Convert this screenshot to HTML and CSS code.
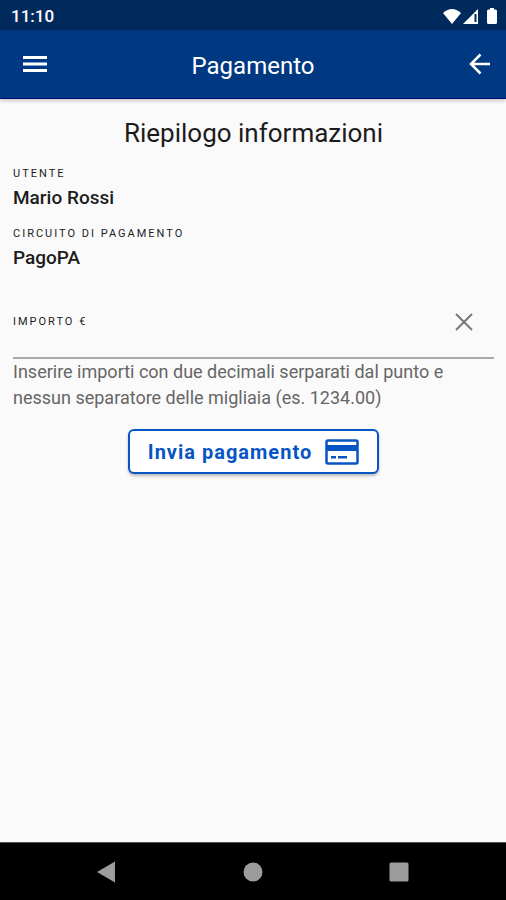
FILE: index.html
```html
<!DOCTYPE html>
<html lang="it">
<head>
<meta charset="utf-8">
<meta name="viewport" content="width=device-width, initial-scale=1">
<title>Pagamento</title>
<link rel="stylesheet" href="styles.css">
</head>
<body>
<div class="status-bar">
  <span>11:10</span>
  <svg class="status-icons" width="56" height="18" viewBox="0 0 56 18" fill="#fff" aria-hidden="true">
    <path d="M1 6Q10-2 19 6L10 17Z"/>
    <path d="M21 17L36 2V17Z"/>
    <path d="M33.500 7V15" stroke="#002a5c" stroke-width="2"/>
    <path d="M45 4Q45 2.500 46.500 2.500H48V1H52V2.500H53.500Q55 2.500 55 4V15.500Q55 17 53.500 17H46.500Q45 17 45 15.500Z"/>
  </svg>
</div>
<header class="app-bar">
  <button class="icon-button" type="button" aria-label="Menu">
    <svg width="24" height="18" viewBox="0 0 24 18" fill="#fff"><path d="M0 1H24V4H0ZM0 7.500H24V10.500H0ZM0 14H24V17H0Z"/></svg>
  </button>
  <h1 class="app-title">Pagamento</h1>
  <button class="icon-button" type="button" aria-label="Indietro">
    <svg width="22" height="22" viewBox="0 0 22 22" fill="none" stroke="#fff" stroke-width="2.500"><path d="M21 11H3M11.500 1.500L2 11L11.500 20.500"/></svg>
  </button>
</header>
<main class="content">
  <h2 class="heading">Riepilogo informazioni</h2>
  <dl class="summary">
    <div class="entry"><dt class="label">UTENTE</dt><dd class="value">Mario Rossi</dd></div>
    <div class="entry"><dt class="label">CIRCUITO DI PAGAMENTO</dt><dd class="value">PagoPA</dd></div>
  </dl>
  <form class="form">
    <div class="field">
      <label class="label" for="amount">IMPORTO €</label>
      <input class="amount" id="amount" type="text" inputmode="decimal" aria-describedby="hint">
      <button class="clear" type="reset" aria-label="Cancella importo">
        <svg width="18" height="18" viewBox="0 0 18 18" fill="none" stroke="#777" stroke-width="2"><path d="M1 1L17 17M17 1L1 17"/></svg>
      </button>
    </div>
    <p class="hint" id="hint">Inserire importi con due decimali serparati dal punto e nessun separatore delle migliaia (es. 1234.00)</p>
    <button class="submit" type="button">
      <span>Invia pagamento</span>
      <svg width="34" height="26" viewBox="0 0 34 26" aria-hidden="true">
        <rect x="1.500" y="1.500" width="31" height="23" rx="1.500" fill="none" stroke="#0755c4" stroke-width="2.500"/>
        <path d="M1 6H33V12H1ZM6 17H11V19.500H6ZM13 17H22V19.500H13Z" fill="#0755c4"/>
      </svg>
    </button>
  </form>
</main>
<nav class="system-nav" aria-label="Sistema">
  <button class="nav-button" type="button" aria-label="Indietro"><svg width="22" height="22" viewBox="0 0 22 22" fill="#9c9c9c"><path d="M1 11L19 .5V21.500Z"/></svg></button>
  <button class="nav-button" type="button" aria-label="Home"><svg width="22" height="22" viewBox="0 0 22 22" fill="#9c9c9c"><circle cx="11" cy="11" r="9.500"/></svg></button>
  <button class="nav-button" type="button" aria-label="Recenti"><svg width="22" height="22" viewBox="0 0 22 22" fill="#9c9c9c"><rect x="1.500" y="1.500" width="19" height="19" rx="1.500"/></svg></button>
</nav>
</body>
</html>
```

FILE: styles.css
```css
* {
  box-sizing: border-box;
}

body {
  display: flex;
  flex-direction: column;
  min-height: 100vh;
  margin: 0;
  background: #fafafa;
  color: #1c1c1c;
  font-family: Roboto, "Noto Sans", sans-serif;
}

button {
  display: flex;
  align-items: center;
  justify-content: center;
  padding: 0;
  border: 0;
  background: none;
  font-family: inherit;
}

.status-bar {
  display: flex;
  align-items: center;
  justify-content: space-between;
  height: 30px;
  padding: 1px 8px 0 11px;
  background: #002a5c;
  color: #fff;
  font-size: 17px;
  font-weight: 500;
}

.app-bar {
  display: flex;
  align-items: center;
  justify-content: space-between;
  height: 69px;
  padding: 0 2px 0 11px;
  border-bottom: 1px solid #040a70;
  background: #003882;
  box-shadow: 0 2px 4px rgb(0 0 0 / 20%);
  color: #fff;
}

.icon-button {
  width: 48px;
  height: 48px;
}

.app-title {
  flex: 1;
  margin: 0;
  padding: 4px 9px 0 0;
  font-size: 24px;
  font-weight: 400;
  line-height: 32px;
  text-align: center;
}

.content {
  flex: 1;
  padding: 16px 12px 16px 13px;
}

.heading {
  margin: 0 0 16px;
  font-size: 26px;
  font-weight: 400;
  line-height: 36px;
  text-align: center;
}

.summary {
  margin: 0;
}

.entry {
  height: 60px;
}

.label {
  display: block;
  font-size: 11px;
  font-weight: 400;
  letter-spacing: 2px;
  line-height: 14px;
}

.value {
  margin: 0;
  font-size: 19px;
  font-weight: 500;
  line-height: 34px;
}

.field {
  display: grid;
  grid-template-columns: auto 1fr 60px;
  align-items: center;
  height: 72px;
  border-bottom: 2px solid #aaa;
}

.amount {
  width: 100%;
  height: 48px;
  padding: 0 12px;
  border: 0;
  outline: 0;
  background: none;
  font-family: inherit;
  font-size: 19px;
}

.clear {
  height: 48px;
}

.hint {
  margin: 0 0 18px;
  color: #666;
  font-size: 18px;
  line-height: 26px;
}

.submit {
  gap: 13px;
  min-height: 45px;
  margin: 0 auto;
  padding: 6px 18px;
  border: 2px solid #0755c4;
  border-radius: 6px;
  background: #fff;
  box-shadow: 0 2px 3px rgb(0 0 0 / 25%);
  color: #0755c4;
  font-size: 20px;
  font-weight: 700;
  letter-spacing: 1px;
  line-height: 26px;
}

.system-nav {
  display: flex;
  align-items: center;
  justify-content: center;
  gap: 98px;
  height: 58px;
  border-top: 1px solid #555;
  background: #000;
}

.nav-button {
  width: 48px;
  height: 48px;
}
```
